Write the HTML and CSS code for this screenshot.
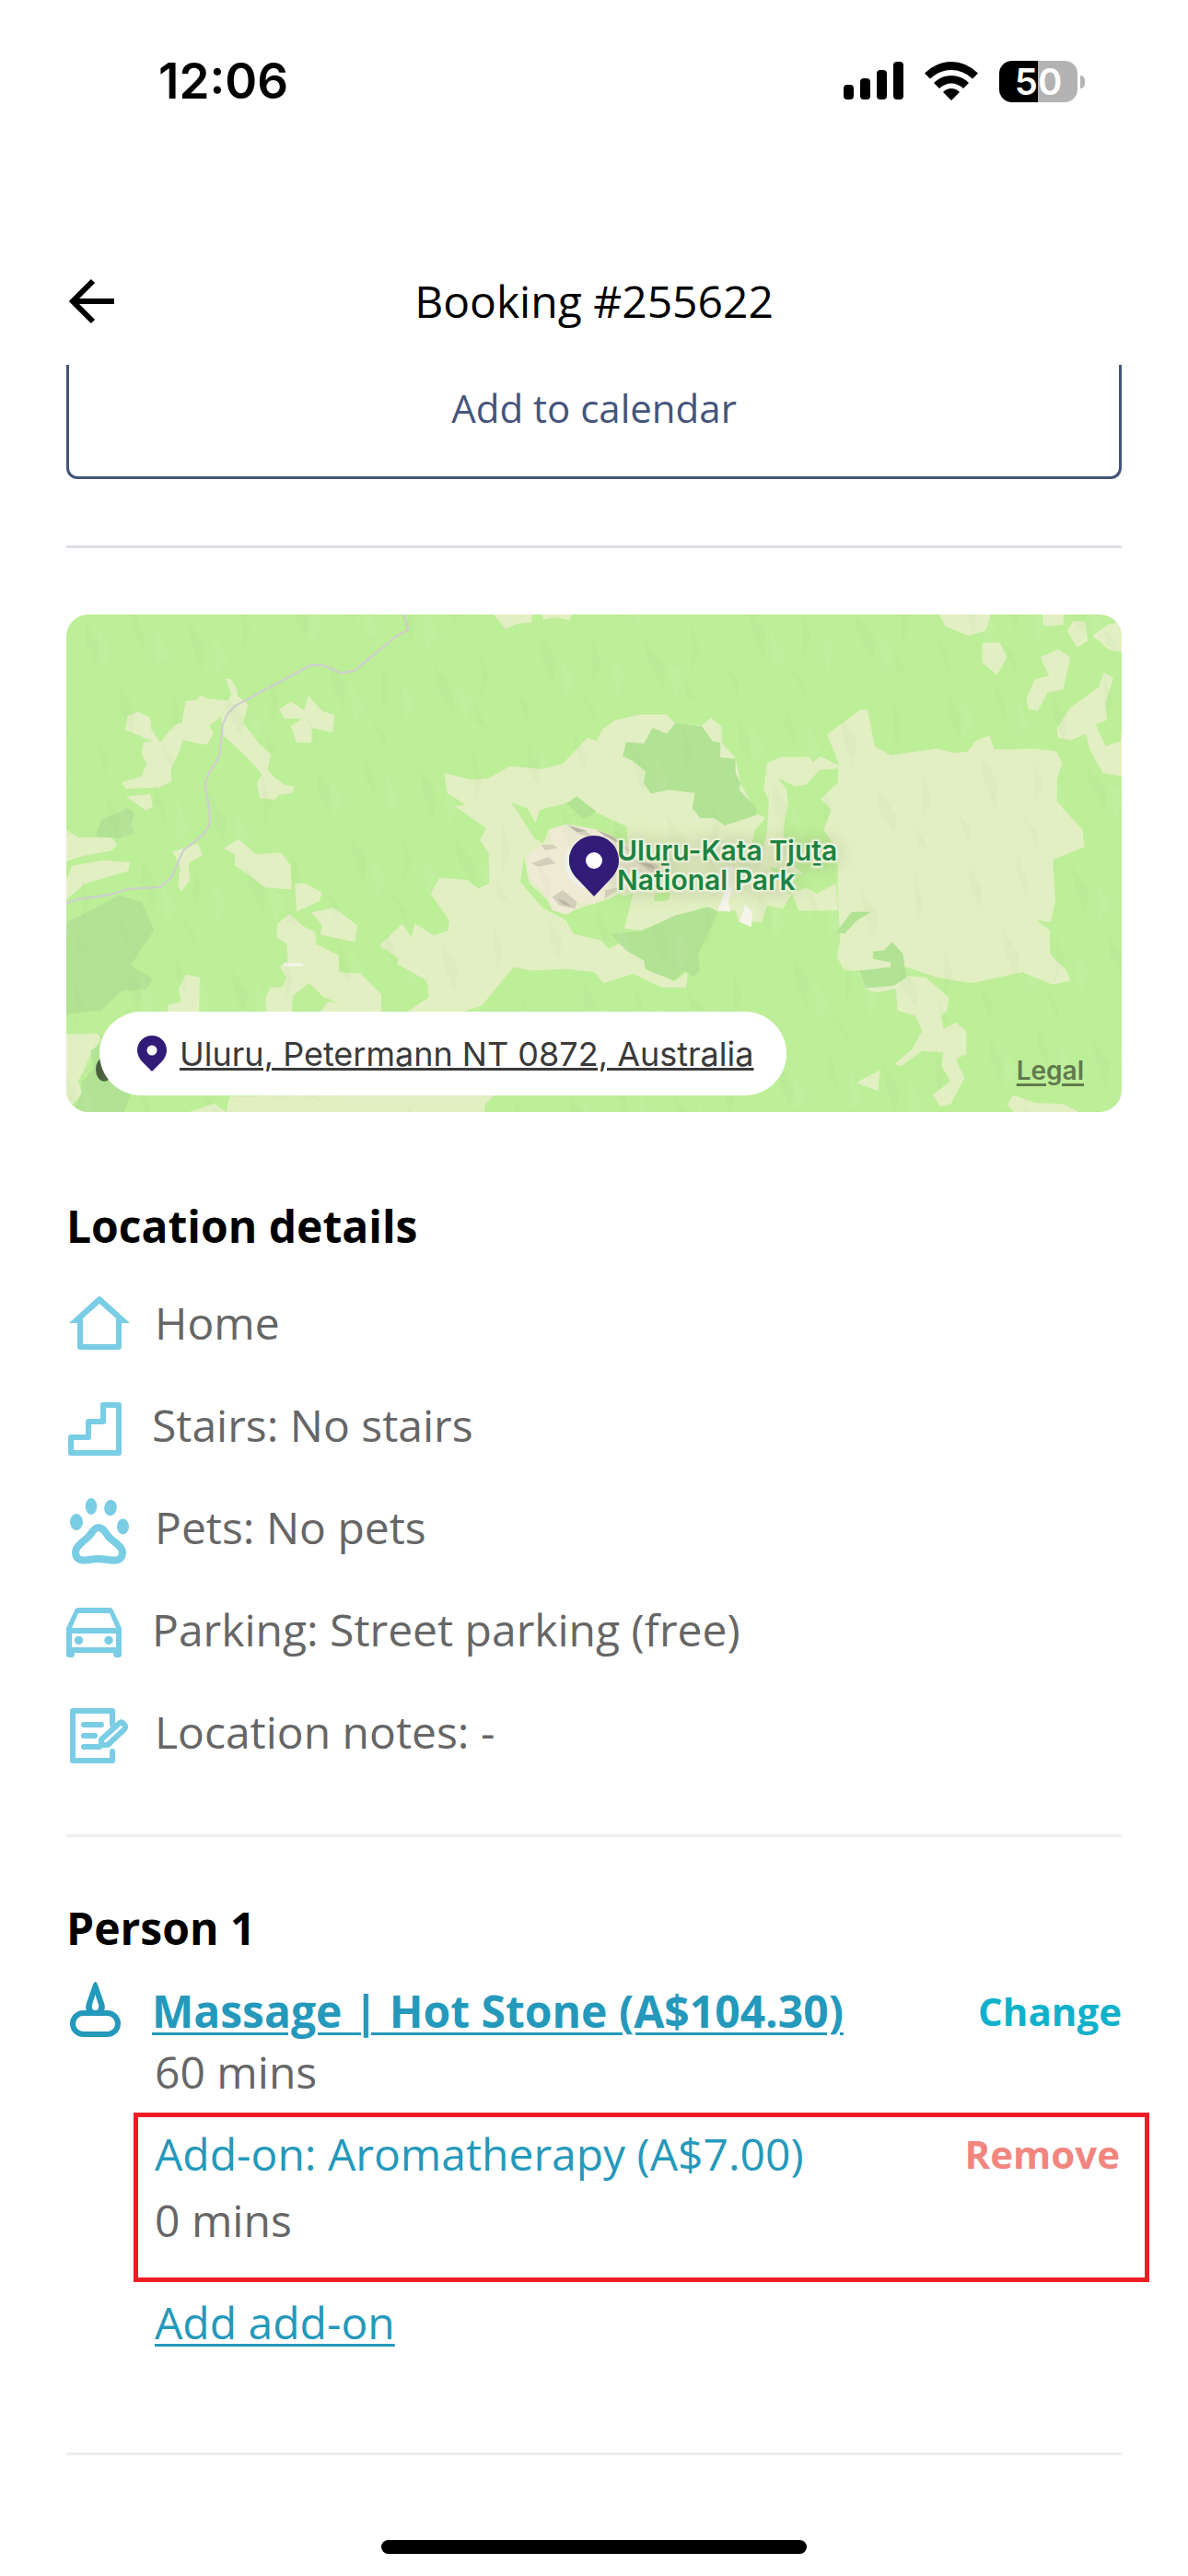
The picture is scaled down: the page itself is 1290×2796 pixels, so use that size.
FILE: index.html
```html
<!DOCTYPE html>
<html lang="en">
<head>
<meta charset="utf-8">
<meta name="viewport" content="width=device-width, initial-scale=1">
<title>Booking #255622</title>
<link rel="stylesheet" href="styles.css">
</head>
<body>
<div class="status">
  <time class="status-time">12:06</time>
  <div class="status-icons">
    <svg class="signal" viewBox="0 0 65 42" width="65" height="42" aria-hidden="true">
      <rect x="0" y="25" width="11" height="16" rx="4"/><rect x="18" y="18" width="11" height="23" rx="4"/>
      <rect x="36" y="9" width="11" height="32" rx="4"/><rect x="54" y="0" width="11" height="41" rx="4"/>
    </svg>
    <svg class="wifi" viewBox="0 0 58 42" width="58" height="42" aria-hidden="true">
      <path d="M0 12.5Q13 0 29 0T58 12.5L52 18.500Q42 9 29 9T6 18.500Z"/>
      <path d="M10 23Q18 15 29 15T48 23L42 29Q36 23.500 29 23.500T16 29Z"/>
      <path d="M20 33Q24 29 29 29T38 33L29 42Z"/>
    </svg>
    <div class="battery"><span class="battery-level">50</span></div>
  </div>
</div>

<header class="header">
  <button class="back" type="button" aria-label="Back">
    <svg viewBox="0 0 54 54" width="54" height="54" aria-hidden="true"><path d="M52 27H8M29 5L7 27L29 49" fill="none" stroke="#000" stroke-width="6"/></svg>
  </button>
  <h1 class="title">Booking #255622</h1>
</header>

<main class="content">
  <button class="calendar" type="button">Add to calendar</button>
  <hr class="rule rule-cool">

  <section class="map" aria-label="Map">
    <svg class="terrain" viewBox="0 0 1146 540" preserveAspectRatio="xMidYMid slice" aria-hidden="true">
      <defs>
        <pattern id="ridges" width="230" height="190" patternUnits="userSpaceOnUse" patternTransform="rotate(-7)">
          <g fill="#9ccc78" fill-opacity=".08">
            <path d="M20 10l10 26-4 22-9-24zM74 4l7 30-3 14-9-28zM130 22l16 30-8 26-7-28zM190 8l6 34-10 22 2-30zM48 84l14 28-6 30-10-34zM104 96l6 26-12 22zM160 104l18 30-4 24-14-30zM212 92l6 32-12 20zM14 140l12 20-4 20zM84 152l14 22-3 14zM198 150l12 30-13-10z"/>
          </g>
          <g fill="#fff" fill-opacity=".05">
            <path d="M32 16l12 30-14 18zM94 20l10 38-14 10zM156 40l12 30-16 18zM66 110l14 30-14 16zM122 116l12 22-12 28zM182 128l14 16-12 30z"/>
          </g>
        </pattern>
      </defs>
      <rect width="1146" height="540" fill="#bdee98"/>
      <g transform="translate(-12 -17) scale(.3827 .3635)">
        <g fill="#e2efc3">
          <path d="M370 305L400 303 412 287 430 298 490 303 500 285 483 238 500 240 515 270 518 290 548 315 533 370 580 435 612 465 603 510 620 530 650 555 678 560 672 580 635 585 625 600 580 595 572 550 587 525 550 480 520 450 475 405 470 350 437 380 450 400 430 436 362 422 350 460 328 510 330 545 295 563 200 567 187 548 245 530 260 490 245 465 250 430 275 425 230 405 198 390 205 350 235 337 270 355 272 390 298 428 340 375 360 370z"/>
          <path d="M635 328L670 307 706 332 718 288 757 335 793 347 787 398 730 385 727 430 685 430 668 380 700 358 650 357z"/>
          <path d="M200 590L270 583 277 620 258 632z"/>
          <path d="M30 690L65 712 160 712 175 735 160 752 75 768 30 785zM48 797L140 780 212 787 208 812 85 850 30 900 30 840z"/>
          <path d="M333 755L405 730 418 765 378 790 382 840 358 875 348 860 355 800z"/>
          <path d="M478 745L520 718 570 763 640 757 668 795 670 868 595 862 550 825 508 795 510 765z"/>
          <path d="M680 850L710 850 757 877 750 902 685 935zM727 937L790 922 858 975 850 1025 752 1003 757 975z"/>
          <path d="M630 970L665 940 700 975 738 995 740 1030 805 1065 805 1115 865 1118 925 1180 925 1235 750 1235 775 1203 805 1208 760 1188 720 1147 675 1185 670 1235 600 1235 597 1190 610 1160 645 1160 655 1130 637 1097 660 1080 657 1030 627 1010z"/>
          <path d="M318 1235L320 1212 357 1203 350 1165 370 1122 410 1130 408 1235z"/>
          <path d="M30 1300L120 1298 130 1315 105 1350 80 1410 65 1440 75 1475 50 1510 30 1532z"/>
          <path d="M375 1534L450 1507 485 1532 495 1485 1245 1480 1220 1510 1218 1534z"/>
          <path d="M1243 45L1355 45 1350 70 1310 74 1278 90 1260 68zM1382 45L1466 45 1460 64 1420 55 1385 62z"/>
          <path d="M1104 520L1180 540 1230 535 1290 500 1385 508 1440 492 1510 415 1535 425 1552 390 1590 362 1660 345 1735 345 1758 370 1835 378 1860 355 1890 380 1892 430 1930 475 1945 550 1990 640 2015 655 1985 690 1975 740 2010 740 2020 690 2025 600 2010 570 2020 490 2060 472 2140 472 2150 488 2170 470 2220 495 2220 507 2170 510 2130 555 2100 560 2050 535 2075 570 2080 610 2070 660 2065 720 2100 800 2120 820 2110 850 2160 880 2215 850 2220 930 2110 932 2090 880 2065 925 2020 915 2005 965 1940 965 1930 930 1880 935 1840 920 1660 990 1615 985 1630 900 1600 880 1450 960 1470 1000 1550 1020 1570 1045 1600 1030 1670 1080 1680 1110 1760 1140 1795 1110 1790 1160 1720 1160 1640 1120 1555 1148 1530 1115 1450 1105 1350 1110 1300 1100 1210 1215 1160 1232 1000 1232 1060 1190 1055 1140 970 1090 975 1075 920 1035 985 970 1010 1010 1020 970 1075 1005 1115 990 1118 960 1065 880 1090 832 1170 840 1200 865 1232 850 1230 760 1205 720 1222 685 1135 620 1165 615 1112 580z"/>
          <path d="M2190 405L2285 330 2305 332 2325 440 2370 467 2500 447 2550 460 2590 455 2610 425 2650 408 2665 450 2780 447 2840 455 2857 490 2842 540 2842 605 2915 690 2920 740 2830 780 2838 900 2825 965 2785 960 2822 990 2822 1060 2870 1110 2880 1140 2830 1152 2745 1115 2600 1148 2500 1130 2415 1100 2300 1110 2240 1110 2218 1070 2228 1010 2220 900 2220 750 2180 690 2200 630 2172 597 2220 550 2222 490z"/>
          <path d="M2410 1125L2470 1130 2535 1190 2530 1230 2515 1245 2520 1285 2555 1265 2585 1290 2585 1360 2555 1375 2580 1430 2540 1510 2510 1515 2490 1480 2540 1440 2515 1395 2520 1355 2460 1350 2400 1395 2380 1390 2430 1345 2460 1290 2440 1245 2390 1230 2385 1165 2330 1175 2300 1165 2280 1115z"/>
          <path d="M2272 1445L2340 1407 2335 1470zM2700 1510L2718 1482 2780 1505 2860 1508 2905 1532 2720 1532z"/>
          <path d="M2508 45L2655 45 2640 95 2590 110 2525 82zM2630 132L2680 130 2700 175 2672 228 2630 190zM2800 45L2862 45 2860 78 2805 82zM2870 95L2890 65 2922 68 2930 125 2900 145zM2943 110L2990 75 3030 70 3030 160 2990 152z"/>
          <path d="M2795 175L2845 150 2880 175 2860 270 2815 280 2788 335 2762 330 2755 300 2780 240 2820 230z"/>
          <path d="M2842 385L2880 325 2960 265 2975 220 3002 235 2980 310 2985 362 2952 375 2980 440 3022 425 3030 350 3030 530 2972 520 2935 450 2925 402 2880 422 2845 415z"/>
        </g>
        <g fill="#bdee98">
          <path d="M1295 610L1340 625 1362 670 1375 630 1450 610 1540 640 1622 680 1622 740 1530 690 1400 690 1385 730 1360 715 1320 650z"/>
          <path d="M1330 770L1345 850 1440 940 1560 900 1640 880 1610 1000 1570 1045 1550 1020 1470 1000 1450 960 1380 920 1320 845z"/>
          <path d="M1700 880L1745 875 1740 900 1700 905zM2025 800L2110 820 2200 840 2080 880zM1985 700L2010 680 2000 740 1975 750z"/>
        </g>
        <g fill="#b2e294">
          <path d="M115 710L130 660 205 625 225 640 215 675 225 700 180 715z"/>
          <path d="M30 965L75 945 180 885 245 905 280 990 235 1060 215 1095 275 1135 260 1165 190 1170 130 1228 30 1240z"/>
          <path d="M130 1290L130 1330 100 1350 110 1400 75 1445 75 1475 50 1534 195 1534 215 1475 150 1400z"/>
          <path d="M1610 470L1620 428 1670 432 1695 385 1735 402 1760 370 1835 380 1865 425 1887 430 1887 473 1930 478 1930 520 1945 550 1940 570 1990 625 1990 645 1900 677 1870 655 1830 655 1808 625 1815 580 1740 570 1690 582 1670 550 1675 515 1640 485z"/>
          <path d="M1450 610L1480 590 1535 635 1500 658z"/>
          <path d="M1575 1000L1665 992 1760 945 1855 920 1880 935 1825 1060 1828 1110 1810 1130 1785 1110 1755 1140 1675 1105 1670 1080 1620 1050z"/>
          <path d="M2280 1110L2370 1100 2370 1085 2320 1075 2320 1052 2350 1050 2375 1025 2405 1060 2415 1130 2380 1155 2300 1163zM2215 995L2260 935 2315 935 2275 960 2240 1000z"/>
        </g>
        <path fill="#f5f5ec" d="M1900 800L1925 800 1922 870 1910 900 1915 935 1880 930 1895 890zM1958 915L1978 935 1975 980 1942 965zM648 1088H703V1096H648z"/>
        <path fill="none" stroke="#cfcfcf" stroke-width="6" stroke-linejoin="round" d="M987 45L1002 92 970 110 848 215 810 222 760 198 725 198 510 320 488 345 475 375 466 470 435 523 425 553 439 643 437 675 420 704 363 752 330 832 297 861 210 866 150 885 70 896 28 910"/>
        <path fill="#eeead4" d="M1335 770L1380 735 1412 733 1400 690 1450 672 1540 690 1600 720 1700 790 1735 820 1650 860 1570 880 1530 910 1480 905 1480 925 1450 943 1410 930 1390 880 1350 840z"/>
        <path fill="#d3cfbb" d="M1378 735L1412 733 1425 745 1390 750zM1450 674L1500 690 1530 712 1490 705zM1540 690L1600 720 1650 770 1580 720zM1640 780L1700 790 1735 822 1690 815zM1410 890L1440 870 1480 905 1475 925 1430 915zM1350 790L1400 770 1420 790 1370 800zM1560 870L1610 860 1560 895z"/>
        <path fill="#b9b4a4" d="M1460 678L1510 693 1480 697zM1535 690L1585 712 1600 730 1560 708zM1650 785L1690 792 1710 812zM1425 895L1450 905 1465 920 1440 912z"/>
        <ellipse cx="139" cy="1405" rx="24" ry="36" fill="#4a5f3c"/>
      </g>
      <rect width="1146" height="540" fill="url(#ridges)"/>
      <circle cx="569" cy="270" r="28" fill="#eef0ea"/>
      <circle cx="572" cy="267" r="26" fill="#1d8342"/>
    </svg>
    <span class="place">Uluṟu-Kata Tjuṯa<br>National Park</span>
    <svg class="marker" viewBox="0 0 54 66" width="54" height="66" aria-hidden="true"><path fill="#311c78" fill-rule="evenodd" d="M27 0C42 0 54 12 54 27C54 36 49 43 44 48L27 66L10 48C5 43 0 36 0 27C0 12 12 0 27 0Z"/><circle cx="27" cy="27" r="9" fill="#fff"/></svg>
    <a class="legal" href="#legal">Legal</a>
    <a class="address" href="#directions">
      <svg viewBox="0 0 32 39" width="32" height="39" aria-hidden="true"><path fill="#311c78" d="M16 0C25 0 32 7 32 16C32 21 29 26 26 29L16 39L6 29C3 26 0 21 0 16C0 7 7 0 16 0Z"/><circle cx="16" cy="16" r="5.500" fill="#fff"/></svg>
      <span class="address-text">Uluru, Petermann NT 0872, Australia</span>
    </a>
  </section>

  <section class="location">
    <h2 class="heading">Location details</h2>
    <ul class="details">
      <li class="row"><svg class="icon" viewBox="0 0 69 72" aria-hidden="true"><path fill-rule="evenodd" d="M34 8Q36 6 38 8L69 36H60V62Q60 65 57 65H15Q12 65 12 62V36H3ZM36 15L18 31V59H54V31Z"/></svg><span>Home</span></li>
      <li class="row"><svg class="icon icon-narrow" viewBox="0 0 66 72" aria-hidden="true"><path fill="none" stroke="currentColor" stroke-width="6" stroke-linejoin="round" d="M57 66H5V49H24V32H40V14H57Z"/></svg><span>Stairs: No stairs</span></li>
      <li class="row"><svg class="icon" viewBox="0 0 69 72" aria-hidden="true"><ellipse cx="11" cy="30" rx="7" ry="9"/><ellipse cx="27" cy="13" rx="6.300" ry="9"/><ellipse cx="48" cy="14.500" rx="6.800" ry="8.700" transform="rotate(8 48 14.500)"/><ellipse cx="61.500" cy="35" rx="6.500" ry="8.500"/><path fill="none" stroke="currentColor" stroke-width="8" d="M35 36C40 36 42 41 46 46S61 56 61 63C61 70 56 72 50 71.500C44 71 40 70 35 70S26 71 20 71.500C15 72 10 70 10 63C10 56 20 50 24 46S30 36 35 36Z"/></svg><span>Pets: No pets</span></li>
      <li class="row"><svg class="icon icon-narrow" viewBox="0 0 66 72" aria-hidden="true"><path fill-rule="evenodd" d="M13 12H47Q50 12 51 15L60 34V63Q60 66 57 66H54Q51 66 51 61H9Q9 66 6 66H3Q0 66 0 63V34L9 15Q10 12 13 12ZM13 18L6 34H54L47 18ZM6 40V55H54V40Z"/><circle cx="13.500" cy="47.500" r="4.700"/><circle cx="46" cy="47.500" r="4.700"/></svg><span>Parking: Street parking (free)</span></li>
      <li class="row"><svg class="icon" viewBox="0 0 69 72" aria-hidden="true"><g fill="none" stroke="currentColor" stroke-width="6" stroke-linejoin="round" stroke-linecap="round"><path d="M50 28V13H7V67H50V57M19 28H38M19 40H31M19 52H36"/><path d="M38 50V44L58 26Q60 24 62 27Q66 30 63 33L45 50Z"/></g></svg><span>Location notes: -</span></li>
    </ul>
  </section>
  <hr class="rule">

  <section class="person">
    <h2 class="heading">Person 1</h2>
    <div class="service">
      <svg class="icon icon-narrow icon-teal" viewBox="0 0 66 72" aria-hidden="true"><rect x="7" y="38" width="49" height="23" rx="11.500" fill="none" stroke="currentColor" stroke-width="6"/><path fill-rule="evenodd" d="M29 7Q30 4 31.500 4T34 7L41 27Q43 33 40 37H23Q20 33 22 27ZM31.500 18L28 29Q27 35 31.500 35T35 29Z"/></svg>
      <a class="service-name" href="#service">Massage | Hot Stone (A$104.30)</a>
      <button class="action" type="button">Change</button>
    </div>
    <p class="duration">60 mins</p>
    <div class="addon">
      <div class="addon-top">
        <span class="addon-name">Add-on: Aromatherapy (A$7.00)</span>
        <button class="action action-remove" type="button">Remove</button>
      </div>
      <p class="addon-duration">0 mins</p>
    </div>
    <a class="add-addon" href="#add">Add add-on</a>
  </section>
  <hr class="rule">
</main>
<div class="home-bar"></div>
</body>
</html>
```
FILE: styles.css
```css
* { box-sizing: border-box; }

body {
  margin: 0;
  background: #fff;
  color: #666;
  font-family: "Open Sans", sans-serif;
  font-size: 48px;
  line-height: 66px;
}

h1, h2, p, ul { margin: 0; padding: 0; font-size: inherit; }
ul { list-style: none; }
button { padding: 0; border: 0; background: none; font: inherit; }

/* Status bar */
.status {
  display: flex;
  justify-content: space-between;
  padding: 58px 112px 138px 172px;
  font-family: Inter, sans-serif;
  color: #000;
}
.status-time { font-size: 53px; font-weight: 600; line-height: 60px; }
.status-icons { display: flex; align-items: center; gap: 23px; }
.battery {
  position: relative;
  width: 85px;
  height: 45px;
  margin-right: 8px;
  border-radius: 14px;
  background: linear-gradient(90deg, #000 50%, #b3b3b3 50%);
  color: #fff;
  font-size: 40px;
  font-weight: 600;
  line-height: 45px;
  text-align: center;
}
.battery::after {
  content: "";
  position: absolute;
  top: 16px;
  right: -8px;
  width: 5px;
  height: 14px;
  border-radius: 0 5px 5px 0;
  background: #b3b3b3;
}

/* Header */
.header {
  display: grid;
  grid-template-columns: 54px 1fr 54px;
  align-items: center;
  height: 140px;
  padding: 2px 72px 0;
}
.back { display: flex; }
.title { color: #000; font-weight: 400; text-align: center; }

.content { padding: 0 72px; }

.calendar {
  display: block;
  width: 100%;
  padding: 18px 0 45px;
  border: 3px solid #44557b;
  border-top: 0;
  border-radius: 0 0 12px 12px;
  color: #44557b;
  font-size: 42px;
  line-height: 58px;
}

.rule { height: 3px; margin: 0; border: 0; background: #eee; }
.rule-cool { margin: 72px 0; background: #dcdfe6; }

/* Map */
.map {
  position: relative;
  height: 540px;
  border-radius: 24px;
  overflow: hidden;
  font-family: Inter, sans-serif;
}
.terrain { display: block; width: 100%; height: 100%; }
.marker { position: absolute; left: 50%; top: 240px; transform: translateX(-50%); }
.place {
  position: absolute;
  left: calc(50% + 25px);
  top: 240px;
  color: #1d8342;
  font-size: 30px;
  font-weight: 600;
  line-height: 32px;
  text-shadow: 0 0 3px #eef4e0, 2px 2px 2px #eef4e0, -2px -2px 2px #eef4e0, 2px -2px 2px #eef4e0, -2px 2px 2px #eef4e0, 0 0 20px #9a9a7a;
}
.legal {
  position: absolute;
  right: 41px;
  bottom: 28px;
  color: #607a4d;
  font-size: 28px;
  font-weight: 600;
  line-height: 34px;
  text-decoration-thickness: 3px;
  text-underline-offset: 4px;
}
.address {
  position: absolute;
  left: 36px;
  bottom: 18px;
  display: flex;
  align-items: center;
  gap: 14px;
  height: 91px;
  padding: 0 36px 0 41px;
  border-radius: 46px;
  background: #fff;
  color: #3a3a3a;
  font-size: 36px;
  line-height: 44px;
  text-decoration: none;
  white-space: nowrap;
}
.address-text { text-decoration: underline; text-decoration-thickness: 3px; text-underline-offset: 2px; }

/* Location details */
.location { padding: 91px 0 78px; }
.heading { color: #000; font-weight: 700; }
.details { display: grid; gap: 45px; margin-top: 39px; }
.row { display: flex; align-items: center; gap: 27px; }
.icon {
  flex: none;
  width: 69px;
  height: 72px;
  margin: -3px 0;
  overflow: visible;
  color: #79cde4;
  fill: currentColor;
}
.icon-narrow { width: 66px; }
.icon-teal { color: #2499bb; }

/* Person */
.person { padding: 66px 0 108px; }
.service { display: flex; align-items: center; gap: 27px; margin-top: 24px; }
.service-name, .add-addon {
  color: #2499bb;
  text-decoration-thickness: 3px;
  text-underline-offset: 5px;
}
.service-name { flex: 1; font-weight: 700; }
.action { color: #10b1cb; font-size: 42px; font-weight: 700; line-height: 58px; }
.action-remove { color: #f1867f; }
.duration { padding-left: 96px; }
.addon {
  margin: 11px -30px 11px 73px;
  padding: 7px 27px 29px 18px;
  border: 5px solid #ee1c25;
}
.addon-top { display: flex; align-items: center; justify-content: space-between; margin-bottom: 6px; }
.addon-name { color: #2499bb; }
.add-addon { display: block; width: fit-content; margin-left: 96px; }

.home-bar {
  width: 462px;
  height: 15px;
  margin: 92px auto 24px;
  border-radius: 8px;
  background: #000;
}
```
